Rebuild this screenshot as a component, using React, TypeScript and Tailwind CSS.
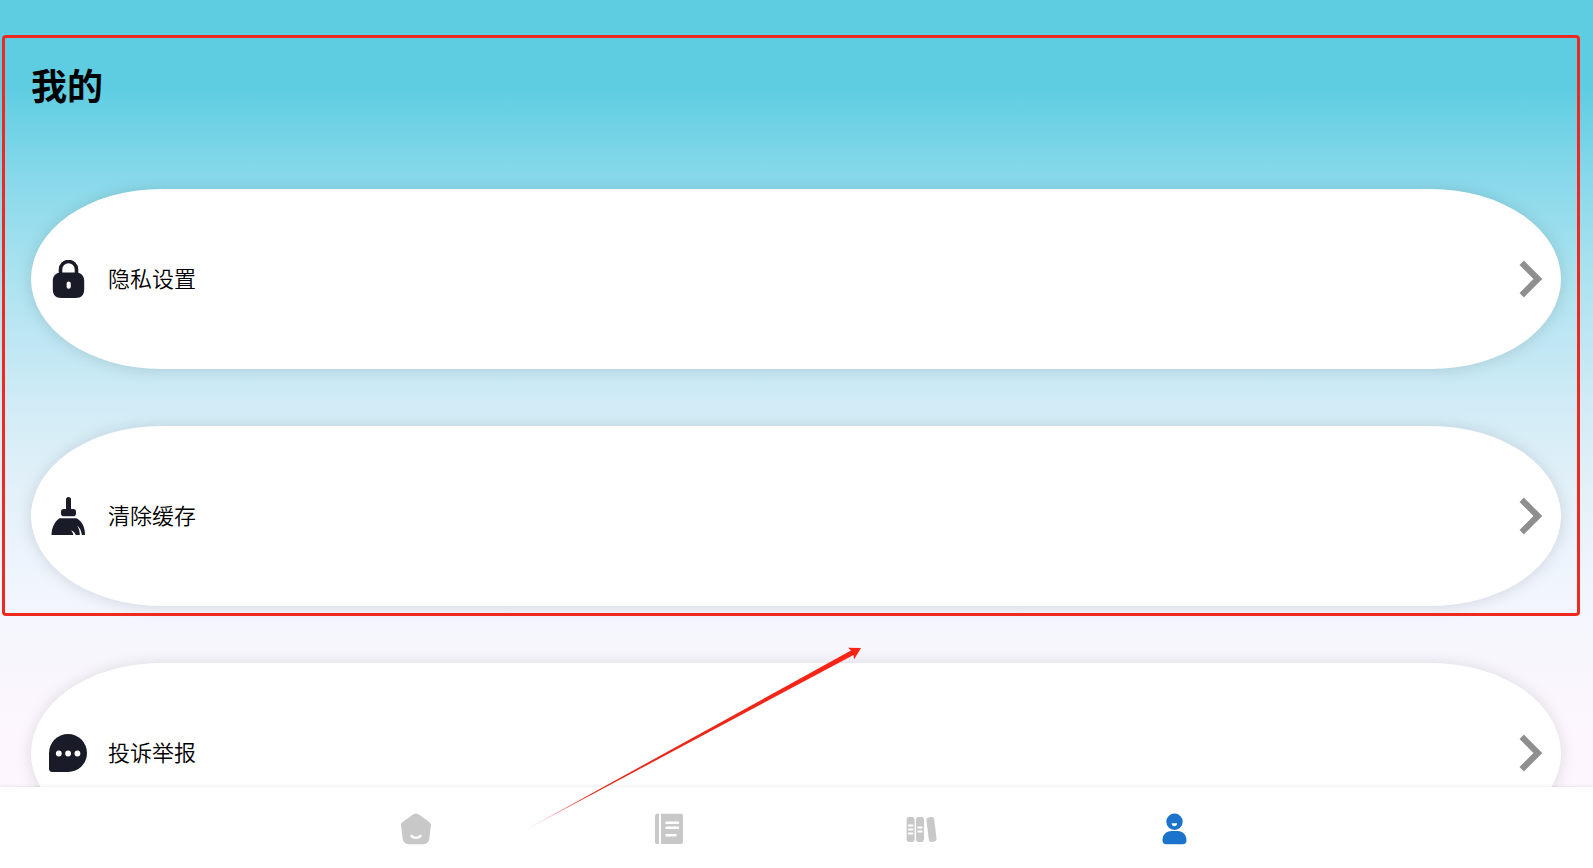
import type { ReactNode } from "react";

function LockIcon() {
  return (
    <svg viewBox="0 0 38 38" className="size-[38px]" aria-hidden="true">
      <path d="M11.500 15V9.500a8 8 0 0 1 16 0V15" fill="none" stroke="#191c28" strokeWidth="3.600" />
      <path
        fill="#191c28"
        fillRule="evenodd"
        d="M12.500 12.500h14c5.500 0 8.700 3 8.700 8.500V29c0 6-2.700 9-8.700 9h-14c-6 0-8.700-3-8.700-9v-8c0-5.500 3.200-8.500 8.700-8.500ZM19.700 21.600a2.100 2.100 0 0 0-2.100 2.100v3a2.100 2.100 0 0 0 4.200 0v-3a2.100 2.100 0 0 0-2.100-2.100Z"
      />
    </svg>
  );
}

function BroomIcon() {
  return (
    <svg viewBox="0 0 38 38" className="size-[38px]" aria-hidden="true">
      <g fill="#191c28">
        <rect x="17" y="0" width="5" height="15" rx="2.500" />
        <rect x="12" y="12" width="15" height="7.200" rx="2.800" />
        <path d="M10.500 21.300h17C33 24.500 36 30 36 38H2.500c0-7.500 3.500-13.800 8-16.700Z" />
      </g>
      <path fill="#fff" d="M21.800 33.200c2.400.8 4.200 2.400 5 4.800h-2.400c-.3-1.800-1.200-3.400-2.600-4.800ZM28 28.600c2.600 1.800 4.400 5.200 4.900 9.400h-2.100c0-3.800-1-6.800-2.800-9.400Z" />
    </svg>
  );
}

function ChatIcon() {
  return (
    <svg viewBox="0 0 38 38" className="size-[38px]" aria-hidden="true">
      <path fill="#191c28" d="M19 0a19 19 0 0 1 0 38H3.500A3.500 3.500 0 0 1 0 34.500V19A19 19 0 0 1 19 0Z" />
      <g fill="#fff">
        <circle cx="9.800" cy="19.500" r="2.900" />
        <circle cx="19.100" cy="19.500" r="2.900" />
        <circle cx="28.400" cy="19.500" r="2.900" />
      </g>
    </svg>
  );
}

function Chevron() {
  return (
    <svg viewBox="0 0 24 38" className="h-[38px] w-6" aria-hidden="true">
      <path d="M2.700 2.800 18.900 19 2.700 35.200" fill="none" stroke="#8f8f8f" strokeWidth="6.200" />
    </svg>
  );
}

function HomeIcon() {
  return (
    <svg viewBox="0 0 32 32" className="size-8" aria-hidden="true">
      <path
        fill="#c8c8c8"
        d="M13.400 1.300a4.500 4.500 0 0 1 5.200 0l10.600 7.600c1.300.9 1.900 2.200 1.700 3.700l-1.600 13.200c-.5 3.400-2.600 5.500-6 5.500H8.700c-3.400 0-5.500-2.100-6-5.500L1 12.600c-.2-1.500.4-2.800 1.700-3.700Z"
      />
      <path d="M11.500 23c2.600 2.300 6.400 2.300 9 0" fill="none" stroke="#fff" strokeWidth="2.600" strokeLinecap="round" />
    </svg>
  );
}

function NotebookIcon() {
  return (
    <svg viewBox="0 0 32 32" className="size-8" aria-hidden="true">
      <path fill="#c8c8c8" d="M4 .7h2V31H4a2 2 0 0 1-2-2V2.700a2 2 0 0 1 2-2ZM8 .7h20a2 2 0 0 1 2 2V29a2 2 0 0 1-2 2H8Z" />
      <path d="M13.500 9.700h11.500M13.500 14.700h11.500M13.500 22.300h9" stroke="#fff" strokeWidth="2.400" strokeLinecap="round" />
    </svg>
  );
}

function BooksIcon() {
  return (
    <svg viewBox="0 0 32 32" className="size-8" aria-hidden="true">
      <g fill="#c8c8c8">
        <rect x=".6" y="4" width="8" height="25" rx="2.400" />
        <rect x="10" y="4" width="8" height="25" rx="2.400" />
        <rect x="21.600" y="4.200" width="7.800" height="24.600" rx="2.400" transform="rotate(-7 25.500 16.500)" />
      </g>
      <path d="M2.700 12.500h3.800M2.700 16.500h3.800M2.700 20.500h3.800M12.100 14.500h3.800M12.100 18.500h3.800" stroke="#fff" strokeWidth="1.900" strokeLinecap="round" />
    </svg>
  );
}

function PersonIcon() {
  return (
    <svg viewBox="0 0 32 32" className="size-8" aria-hidden="true">
      <g fill="#1b73cb">
        <circle cx="15.500" cy="8.800" r="8.200" />
        <path d="M12.500 18h6c5.500 0 9 4 9 9.200 0 2.600-1.300 4-3.800 4H7.300c-2.500 0-3.800-1.400-3.800-4C3.500 22 7 18 12.500 18Z" />
      </g>
      <path fill="#fff" d="M12.700 10.300h5.400c0 3.800-5.400 3.800-5.400 0Z" />
    </svg>
  );
}

const settings: { label: string; icon: ReactNode }[] = [
  { label: "隐私设置", icon: <LockIcon /> },
  { label: "清除缓存", icon: <BroomIcon /> },
  { label: "投诉举报", icon: <ChatIcon /> },
];

const tabs: { label: string; icon: ReactNode }[] = [
  { label: "首页", icon: <HomeIcon /> },
  { label: "笔记", icon: <NotebookIcon /> },
  { label: "书架", icon: <BooksIcon /> },
  { label: "我的", icon: <PersonIcon /> },
];

export default function App() {
  return (
    <div className="relative flex h-screen flex-col overflow-hidden bg-[linear-gradient(to_bottom,#5ecde1_0%,#5ecde1_10%,#86d8ea_20%,#a9e2ef_31%,#cfebf6_46%,#e1f0f8_55%,#f1f5fe_68%,#f6f6fd_73%,#fef6fe_86%)] font-['Noto_Sans_CJK_SC',sans-serif] text-black">
      <main className="min-h-0 flex-1 overflow-hidden pt-[60px] pr-8 pl-[31px]">
        <h1 className="text-4xl leading-[48px] font-bold">我的</h1>
        <ul className="mt-[81px] flex flex-col gap-[57px]">
          {settings.map((item) => (
            <li key={item.label}>
              <button
                type="button"
                className="flex h-[180px] w-full items-center rounded-[130px/90px] bg-white px-[18px] text-left shadow-[0_1px_16px_rgba(0,0,0,0.13)]"
              >
                {item.icon}
                <span className="ml-[21px] flex-1 pb-1 text-[22px] leading-8 font-[350]">{item.label}</span>
                <Chevron />
              </button>
            </li>
          ))}
        </ul>
      </main>

      <nav className="z-10 bg-white pt-[26px] pr-[3px] pb-[23px] shadow-[0_-1px_3px_rgba(0,0,0,0.08)]">
        <div className="mx-auto grid max-w-[1012px] grid-cols-4">
          {tabs.map((tab) => (
            <a key={tab.label} href="#" aria-label={tab.label} className="flex justify-center">
              {tab.icon}
            </a>
          ))}
        </div>
      </nav>

      <div className="pointer-events-none absolute top-[35px] right-[13px] left-[2px] z-20 h-[581px] rounded-sm border-3 border-[#ee2a20]" />
      <svg
        viewBox="0 0 340 186"
        className="pointer-events-none absolute top-[647px] left-[522px] z-20 h-[186px] w-[340px]"
        aria-hidden="true"
      >
        <defs>
          <linearGradient id="tail" x1="0" y1="1" x2="1" y2="0">
            <stop offset="0" stopColor="#f02a1c" stopOpacity="0.300" />
            <stop offset="0.200" stopColor="#e02a1c" />
            <stop offset="1" stopColor="#fa2416" />
          </linearGradient>
        </defs>
        <path fill="url(#tail)" d="M1 184.300 329 3.500 326 .8l13 .2-7 11.500-.5-4.500Z" />
      </svg>
    </div>
  );
}
